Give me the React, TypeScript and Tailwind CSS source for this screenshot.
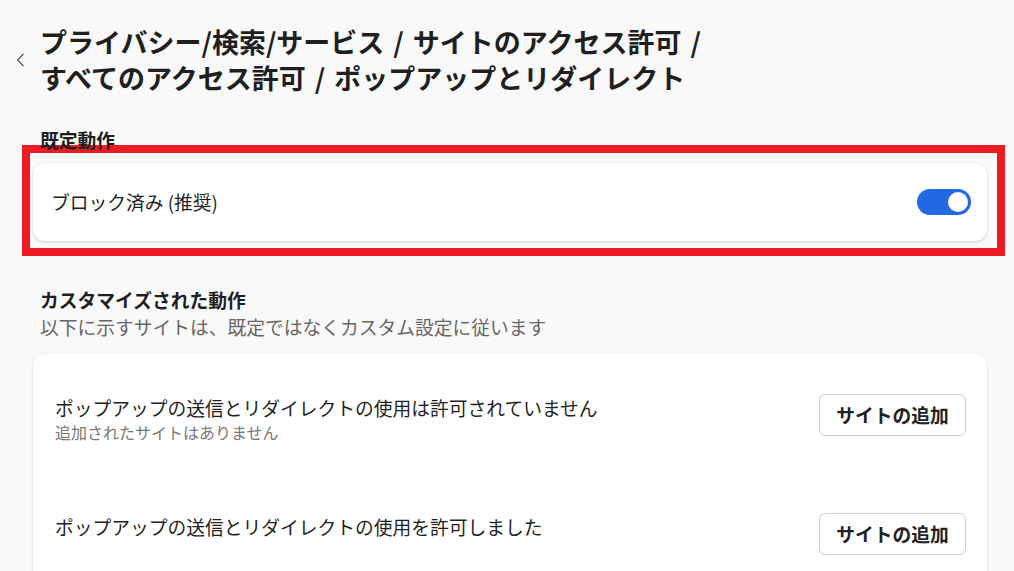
import React from "react";

const rows = [
  {
    title: "ポップアップの送信とリダイレクトの使用は許可されていません",
    sub: "追加されたサイトはありません",
  },
  {
    title: "ポップアップの送信とリダイレクトの使用を許可しました",
    sub: "",
  },
];

function Sep() {
  return <span className="px-[9px]">/</span>;
}

function Toggle() {
  return (
    <div className="flex h-[26px] w-[54px] items-center justify-end rounded-full bg-[#2469e3] pr-[3px]">
      <div className="h-[20px] w-[20px] rounded-full bg-white" />
    </div>
  );
}

export default function App() {
  return (
    <div className="h-screen overflow-hidden bg-[#f9f9f9] font-['Noto_Sans_CJK_JP','Noto_Sans',sans-serif] text-[#1f1f1f]">
      {/* Header / breadcrumb */}
      <div className="flex items-center pt-[24px]">
        <div className="flex w-[40px] justify-center pl-[1px]">
          <svg width="9" height="14" viewBox="0 0 9 14" fill="none">
            <polyline points="7.5,1 1.5,7 7.5,13" stroke="#555" strokeWidth="1.2" />
          </svg>
        </div>
        <h1 className="text-[27px] font-bold leading-[36px]">
          <div>
            プライバシー/検索/サービス<Sep />サイトのアクセス許可<Sep />
          </div>
          <div>
            すべてのアクセス許可<Sep />ポップアップとリダイレクト
          </div>
        </h1>
      </div>

      {/* Default behaviour */}
      <h2 className="ml-[40px] mt-[34px] text-[18.75px] font-bold leading-[20px]">既定動作</h2>
      <div className="ml-[22px] mt-[-5px] w-[983px] border-[8px] border-[#ed1c24] pb-[7px] pl-[3px] pr-[10px] pt-[10px]">
        <div className="flex h-[78px] items-center justify-between rounded-[12px] bg-white pl-[18px] pr-[16px] shadow-[0_1px_3px_rgba(0,0,0,0.18)]">
          <span className="text-[18.75px]">ブロック済み (推奨)</span>
          <Toggle />
        </div>
      </div>

      {/* Customized behaviours */}
      <h2 className="ml-[40px] mt-[31px] text-[18.75px] font-bold leading-[26px]">カスタマイズされた動作</h2>
      <p className="ml-[40px] text-[18.75px] leading-[28px] text-[#666]">
        以下に示すサイトは、既定ではなくカスタム設定に従います
      </p>
      <div className="ml-[33px] mt-[13px] w-[954px] rounded-[12px] bg-white pt-[41px] shadow-[0_1px_3px_rgba(0,0,0,0.18)]">
        {rows.map((r, i) => (
          <div key={i} className="flex items-start justify-between pb-[71px] pl-[22px] pr-[21px]">
            <div>
              <div className="text-[18.75px] leading-[26px]">{r.title}</div>
              {r.sub && <div className="text-[16px] leading-[22px] text-[#777]">{r.sub}</div>}
            </div>
            <button className="mt-[-1px] h-[42px] w-[147px] rounded-[6px] border border-[#cfcfcf] bg-white text-[18.75px] font-bold text-[#222]">
              サイトの追加
            </button>
          </div>
        ))}
      </div>
    </div>
  );
}
